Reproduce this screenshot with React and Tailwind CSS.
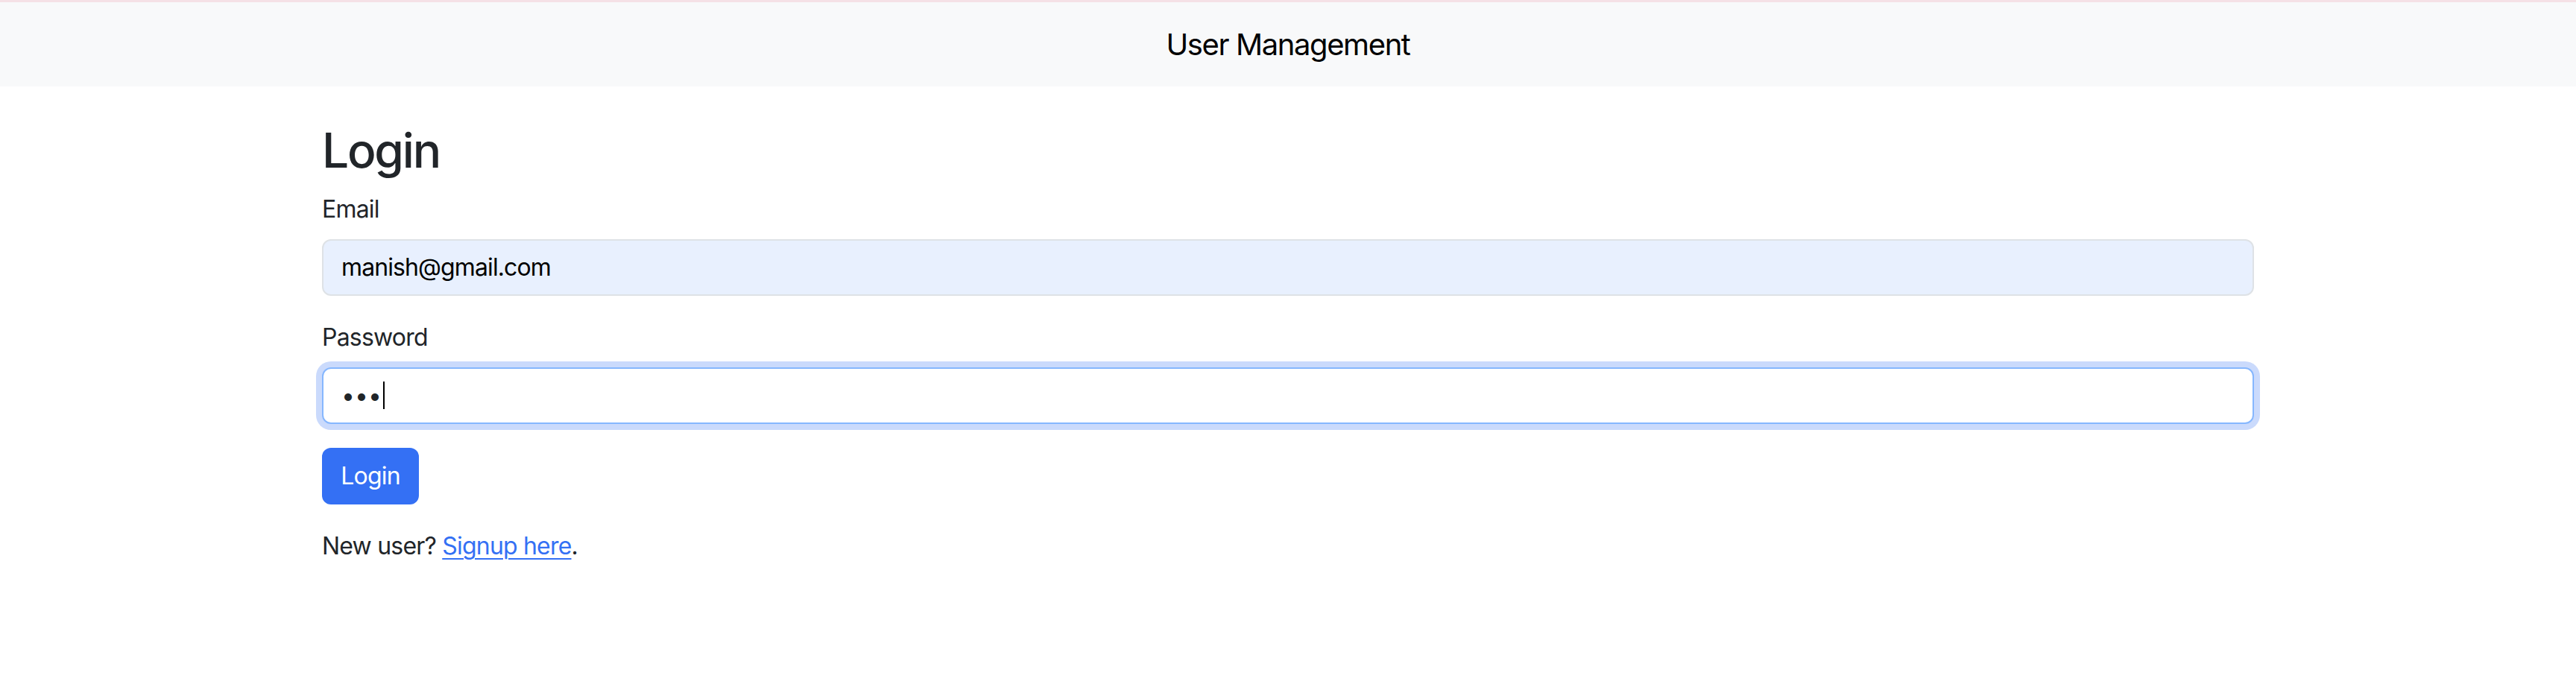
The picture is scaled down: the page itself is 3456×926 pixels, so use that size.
export default function App() {
  return (
    <div className="min-h-[926px] bg-white font-['Inter',sans-serif] text-[#212529]">
      <nav className="h-[116px] bg-[#f8f9fa] border-t-[3px] border-[#f5e1e6] flex items-center justify-center">
        <span className="text-[40px] leading-[60px] text-black tracking-[-0.035em]">User Management</span>
      </nav>
      <main className="w-[2592px] mx-auto mt-[48px]">
        <h2 className="text-[64px] leading-[1.2] font-medium mb-[16px] tracking-[-0.035em]">Login</h2>
        <form onSubmit={(e) => e.preventDefault()}>
          <div className="mb-[32px]">
            <label className="block text-[32px] leading-[48px] mb-[16px] tracking-[-0.025em]">Email</label>
            <input
              type="email"
              readOnly
              value="manish@gmail.com"
              className="block w-full h-[76px] px-[24px] text-[32px] leading-[48px] text-black bg-[#e8f0fe] border-2 border-[#dee2e6] rounded-[12px] outline-none tracking-[-0.028em]"
            />
          </div>
          <div className="mb-[32px]">
            <label className="block text-[32px] leading-[48px] mb-[16px] tracking-[-0.025em]">Password</label>
            <div className="flex items-center w-full h-[76px] px-[24px] bg-white border-2 border-[#86b7fe] rounded-[12px] shadow-[0_0_0_8px_#cadafc]">
              <span className="text-[32px] leading-[48px] text-[#212529] tracking-[0px]">•••</span>
              <span className="inline-block w-[2px] h-[37px] bg-black ml-[2px]"></span>
            </div>
          </div>
          <button
            type="submit"
            className="w-[130px] h-[76px] text-[32px] leading-[48px] text-white bg-[#3470f4] rounded-[12px] tracking-[-0.025em]"
          >
            Login
          </button>
        </form>
        <p className="mt-[32px] text-[32px] leading-[48px] tracking-[-0.025em]">
          New user?{" "}
          <a href="#" className="text-[#3470f4] underline underline-offset-[5px] decoration-2">
            Signup here
          </a>
          .
        </p>
      </main>
    </div>
  );
}
